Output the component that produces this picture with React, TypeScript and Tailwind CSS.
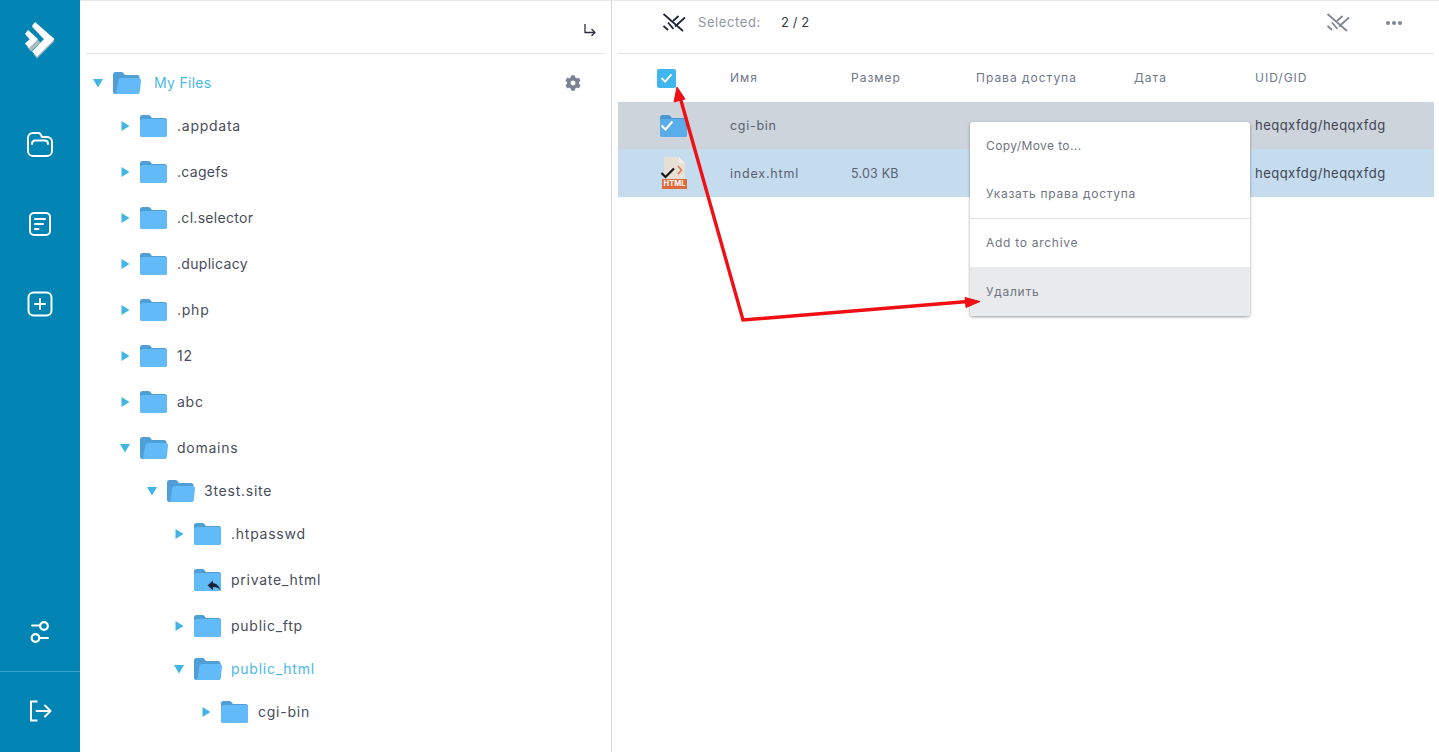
import { FaCog } from "react-icons/fa";

const FONT = "[font-family:Inter,'Liberation_Sans',sans-serif]";

function ClosedFolder({ link }: { link?: boolean }) {
  return (
    <svg width="27" height="22" viewBox="0 0 27 22" className="shrink-0 block">
      <path d="M0 2.500A2.500 2.500 0 0 1 2.500 0h6.200a2 2 0 0 1 1.500.7L12 3h12.500A2.500 2.500 0 0 1 27 5.500V19.500a2.500 2.500 0 0 1-2.500 2.500H2.500A2.500 2.500 0 0 1 0 19.500z" fill="#4f9fd6" />
      <path d="M0 6.500A2.500 2.500 0 0 1 2.500 4h22A2.500 2.500 0 0 1 27 6.500v13a2.500 2.500 0 0 1-2.500 2.500h-22A2.500 2.500 0 0 1 0 19.500z" fill="#62bbf8" />
      {link && <path d="M13.500 16.500l5.500-5v2.800c3.500 0 6 2 7.500 7.200-1.800-2.800-4-3.600-7.500-3.600v3.300z" fill="#16263d" />}
    </svg>
  );
}

function OpenFolder() {
  return (
    <svg width="28" height="22" viewBox="0 0 28 22" className="shrink-0 block">
      <path d="M0 2.500A2.500 2.500 0 0 1 2.500 0h6.200a2 2 0 0 1 1.500.7L12 3h12a2.500 2.500 0 0 1 2.500 2.500V19.500A2.500 2.500 0 0 1 24 22H2.500A2.500 2.500 0 0 1 0 19.500z" fill="#4f9fd6" />
      <path d="M5.500 7.500A2.500 2.500 0 0 1 8 6H25.500A2.500 2.500 0 0 1 28 8.800l-1.200 10.900A2.500 2.500 0 0 1 24.300 22H3z" fill="#62bbf8" />
    </svg>
  );
}

function Caret({ open }: { open: boolean }) {
  return open ? (
    <svg width="10" height="10" viewBox="0 0 10 10" className="shrink-0 block">
      <path d="M0 1h10L5 9.500z" fill="#41b6e6" />
    </svg>
  ) : (
    <svg width="10" height="10" viewBox="0 0 10 10" className="shrink-0 block">
      <path d="M1.500 0L9.500 5l-8 5z" fill="#41b6e6" />
    </svg>
  );
}

type Row = { name: string; pad: string; mt: string; open?: boolean; noCaret?: boolean; link?: boolean; active?: boolean; tight?: boolean };

const rows: Row[] = [
  { name: "My Files", pad: "pl-[13px]", mt: "mt-[14px]", open: true, active: true, tight: true },
  { name: ".appdata", pad: "pl-[40px]", mt: "mt-[13px]" },
  { name: ".cagefs", pad: "pl-[40px]", mt: "mt-[16px]", tight: true },
  { name: ".cl.selector", pad: "pl-[40px]", mt: "mt-[16px]", tight: true },
  { name: ".duplicacy", pad: "pl-[40px]", mt: "mt-[16px]", tight: true },
  { name: ".php", pad: "pl-[40px]", mt: "mt-[16px]" },
  { name: "12", pad: "pl-[40px]", mt: "mt-[16px]" },
  { name: "abc", pad: "pl-[40px]", mt: "mt-[16px]" },
  { name: "domains", pad: "pl-[40px]", mt: "mt-[16px]", open: true },
  { name: "3test.site", pad: "pl-[67px]", mt: "mt-[13px]", open: true },
  { name: ".htpasswd", pad: "pl-[94px]", mt: "mt-[13px]" },
  { name: "private_html", pad: "pl-[94px]", mt: "mt-[16px]", noCaret: true, link: true },
  { name: "public_ftp", pad: "pl-[94px]", mt: "mt-[16px]" },
  { name: "public_html", pad: "pl-[94px]", mt: "mt-[13px]", open: true, active: true },
  { name: "cgi-bin", pad: "pl-[121px]", mt: "mt-[13px]" },
];

function TreeRow({ r }: { r: Row }) {
  return (
    <div className={`flex h-[30px] items-center ${r.pad} ${r.mt}`}>
      {r.noCaret ? <span className="w-[10px] shrink-0" /> : <Caret open={!!r.open} />}
      <span className="ml-[10px] flex w-[27px] shrink-0">{r.open ? <OpenFolder /> : <ClosedFolder link={r.link} />}</span>
      <span className={`pb-[2px] text-[14px] ${r.tight ? "tracking-[0.3px]" : "tracking-[0.75px]"} ${r.active ? "text-[#4cb8e8]" : "text-[#474d5a]"} ${r.name === "My Files" ? "ml-[14px]" : "ml-[10px]"}`}>
        {r.name}
      </span>
    </div>
  );
}

function Logo() {
  return (
    <svg width="34" height="40" viewBox="0 0 34 40" className="block">
      <path d="M10 7L12 5l20.500 16L15 38.500 11.500 34l12-13z" fill="#a9bac3" />
      <path d="M4 15l5-2 9.500 9.500-9.500 9-3.500-4 4-5z" fill="#a9bac3" />
      <path d="M13 2l19.500 17L15 36.500 10 31.500 22 19 10 6z" fill="#fff" />
      <path d="M6 10l10 9-9 9-4-4.500 5-4.500-5-5z" fill="#fff" />
    </svg>
  );
}

function SideIcon({ children }: { children: React.ReactNode }) {
  return (
    <svg width="28" height="28" viewBox="0 0 28 28" fill="none" stroke="#fff" strokeWidth="2" strokeLinecap="round" strokeLinejoin="round" className="block">
      {children}
    </svg>
  );
}

function ClearIcon({ color }: { color: string }) {
  return (
    <svg width="23" height="19" viewBox="0 0 23 19" fill="none" stroke={color} strokeWidth="1.800" className="block">
      <path d="M0.500 1L20 18" />
      <path d="M0.500 13l4.500 4M5 9.500l5.500 6.500M10 8l5.500-5M12 13.500L22 4.500" />
    </svg>
  );
}

function Check({ w, h }: { w: number; h: number }) {
  return (
    <svg width={w} height={h} viewBox="0 0 14 11" fill="none" stroke="#fff" strokeWidth="2" className="block">
      <path d="M1.500 5.500L5.500 9.500 12.500 1.500" />
    </svg>
  );
}

const cols = "grid grid-cols-[112px_121px_125px_158px_121px_1fr] items-center";

export default function App() {
  return (
    <div className={`relative flex h-[752px] w-[1439px] overflow-hidden bg-white ${FONT}`}>
      <aside className="flex w-[80px] shrink-0 flex-col items-center bg-[#0284b5]">
        <div className="mt-[20px] ml-[-2px]"><Logo /></div>
        <div className="mt-[70px]">
          <SideIcon>
            <path d="M2 8a5 5 0 0 1 5-5h5.500c1 0 1.600.5 2.200 1.500L16 7h5a5 5 0 0 1 5 5v9a5 5 0 0 1-5 5H7a5 5 0 0 1-5-5z" />
            <path d="M6 14c0-2.500 1-3.500 3-3.500h10c2 0 3 1 3 3.500" />
          </SideIcon>
        </div>
        <div className="mt-[52px]">
          <SideIcon>
            <rect x="4" y="3" width="20" height="22" rx="4" />
            <path d="M9 9h10M9 14h8M9 19h3.500" />
          </SideIcon>
        </div>
        <div className="mt-[52px]">
          <SideIcon>
            <rect x="2.500" y="2.500" width="23" height="23" rx="5" />
            <path d="M14 9v10M9 14h10" />
          </SideIcon>
        </div>
        <div className="mt-auto">
          <SideIcon>
            <path d="M6 7.500h7.500" strokeWidth="2.200" />
            <circle cx="18" cy="8" r="3.800" strokeWidth="2.200" />
            <circle cx="9.500" cy="20" r="3.800" strokeWidth="2.200" />
            <path d="M13.500 20H22" strokeWidth="2.200" />
          </SideIcon>
        </div>
        <div className="mt-[25px] h-px w-full bg-[#3aa3cb]" />
        <div className="mt-[25px] mb-[27px]">
          <SideIcon>
            <path d="M11.500 4.500H5v19h6.500" strokeLinecap="butt" strokeLinejoin="miter" />
            <path d="M10.500 14H24M19 8.500l5.500 5.500-5.500 5.500" />
          </SideIcon>
        </div>
      </aside>

      <section className="flex w-[532px] shrink-0 flex-col border-t border-r border-t-[#e5e7eb] border-r-[#d5d8dc]">
        <div className="mx-[6px] flex h-[53px] items-center justify-end border-b border-[#e2e4e8] pt-[5px] pr-[8px]">
          <svg width="14" height="14" viewBox="0 0 14 14" fill="none" stroke="#2b3040" strokeWidth="1.300" className="block">
            <path d="M2 1v8.500h10M8.500 6l3.500 3.500L8.500 13" />
          </svg>
        </div>
        <div className="relative">
          {rows.map((r) => <TreeRow key={r.name} r={r} />)}
          <FaCog className="absolute right-[30px] top-[21px] text-[16px] text-[#7b8294]" />
        </div>
      </section>

      <main className="flex flex-1 flex-col border-t border-[#e5e7eb] pr-[5px] pl-[6px]">
        <div className="flex h-[53px] shrink-0 items-center border-b border-[#e2e4e8] pb-[9px]">
          <span className="ml-[45px]"><ClearIcon color="#20263a" /></span>
          <span className="ml-[12px] text-[13px] tracking-[0.6px] text-[#8f95a1]">Selected:</span>
          <span className="ml-[20px] text-[13px] tracking-[0.1px] text-[#333a47]">2 / 2</span>
          <span className="ml-auto"><ClearIcon color="#7f8694" /></span>
          <span className="ml-[36px] mr-[32px] flex gap-[2px]">
            <i className="h-[4px] w-[4px] rounded-full bg-[#7f8694]" />
            <i className="h-[4px] w-[4px] rounded-full bg-[#7f8694]" />
            <i className="h-[4px] w-[4px] rounded-full bg-[#7f8694]" />
          </span>
        </div>

        <div className={`${cols} h-[48px] text-[12px] tracking-[1px] text-[#70778a]`}>
          <span className="ml-[39px] flex h-[19px] w-[19px] items-center justify-center rounded-[2px] bg-[#3fb6ee]"><Check w={13} h={10} /></span>
          <span>Имя</span>
          <span>Размер</span>
          <span>Права доступа</span>
          <span>Дата</span>
          <span>UID/GID</span>
        </div>

        <div className={`${cols} h-[47px] bg-[#ced4dc] text-[#5a6170]`}>
          <span className="relative ml-[42px] block">
            <svg width="27" height="22" viewBox="0 0 27 22" className="block">
              <path d="M0 2.500A2.500 2.500 0 0 1 2.500 0h6.200a2 2 0 0 1 1.500.7L12 3h12.500A2.500 2.500 0 0 1 27 5.500V19.500a2.500 2.500 0 0 1-2.500 2.500H2.500A2.500 2.500 0 0 1 0 19.500z" fill="#4a97cf" />
              <path d="M0 6.500A2.500 2.500 0 0 1 2.500 4h22A2.500 2.500 0 0 1 27 6.500v13a2.500 2.500 0 0 1-2.500 2.500h-22A2.500 2.500 0 0 1 0 19.500z" fill="#5badea" />
            </svg>
            <span className="absolute left-0 top-[5px]"><Check w={14} h={11} /></span>
          </span>
          <span className="pt-[2px] text-[12.500px] tracking-[0.7px]">cgi-bin</span>
          <span />
          <span />
          <span />
          <span className="pt-[1px] text-[13px] tracking-[0.48px] text-[#3f4552]">heqqxfdg/heqqxfdg</span>
        </div>

        <div className={`${cols} h-[48px] bg-[#c5dcee] text-[#5a6170]`}>
          <span className="relative ml-[44px] block h-[32px] w-[25px]">
            <svg width="24" height="24" viewBox="0 0 24 24" className="absolute left-0 top-0 block">
              <path d="M2 0h15l6 6v18H2z" fill="#e8dfd5" />
              <path d="M17 0l6 6h-6z" fill="#f3eee8" />
              <path d="M16 9l3.500 4-3.500 4" fill="none" stroke="#d9784b" strokeWidth="1.500" />
            </svg>
            <span className="absolute bottom-0 left-0 flex h-[10px] w-[25px] items-center justify-center bg-[#e0693a] text-[7.500px] font-bold leading-none text-white">HTML</span>
            <svg width="16" height="12" viewBox="0 0 16 12" fill="none" stroke="#16161a" strokeWidth="2.200" className="absolute left-[-2px] top-[10px] block">
              <path d="M1.500 6L5.500 10 14 1.500" />
            </svg>
          </span>
          <span className="pt-[2px] text-[12.500px] tracking-[0.8px]">index.html</span>
          <span className="pt-[2px] text-[12.500px] tracking-[0.2px]">5.03 KB</span>
          <span />
          <span />
          <span className="pt-[1px] text-[13px] tracking-[0.48px] text-[#3f4552]">heqqxfdg/heqqxfdg</span>
        </div>
      </main>

      <div className="absolute left-[970px] top-[122px] w-[280px] overflow-hidden rounded-[3px] bg-white text-[12px] tracking-[0.72px] text-[#6f7582] shadow-[0_1px_3px_rgba(0,0,0,0.4)]">
        <div className="flex h-[48px] items-center px-[16px] tracking-[0.4px]">Copy/Move to...</div>
        <div className="flex h-[48px] items-center px-[16px]">Указать права доступа</div>
        <div className="flex h-[49px] items-center border-t border-[#dfe1e5] px-[16px]">Add to archive</div>
        <div className="flex h-[49px] items-center bg-[#e9eaec] px-[16px]">Удалить</div>
      </div>

      <svg width="1439" height="752" viewBox="0 0 1439 752" fill="none" className="pointer-events-none absolute left-0 top-0">
        <path d="M968 301.500L743 320 680 97" stroke="#f00f14" strokeWidth="3.400" />
        <path d="M677 87l-3 15 11-3z" fill="#f00f14" stroke="#f00f14" />
        <path d="M980 301.500l-15-4 1 10z" fill="#f00f14" stroke="#f00f14" />
      </svg>
    </div>
  );
}
